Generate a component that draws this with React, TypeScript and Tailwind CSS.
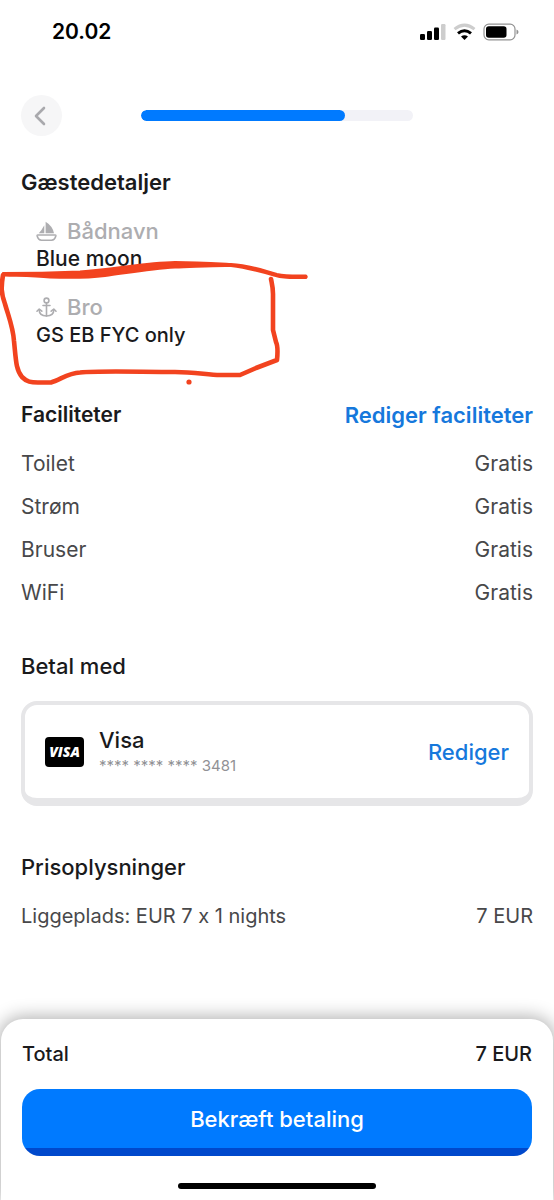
import React from "react";

const facilities = [
  { name: "Toilet", price: "Gratis" },
  { name: "Strøm", price: "Gratis" },
  { name: "Bruser", price: "Gratis" },
  { name: "WiFi", price: "Gratis" },
];

export default function App() {
  return (
    <div className="relative min-h-screen flex flex-col bg-white font-['Inter','Liberation_Sans',sans-serif] [font-feature-settings:'calt'_0] text-[22px] leading-7 text-[#1a1a1c] overflow-x-hidden">
      <StatusBar />

      <header className="grid grid-cols-[120px_1fr_120px] items-center px-[21px] pt-8">
        <button aria-label="Tilbage" className="w-[41px] h-[41px] pr-[3px] rounded-full bg-[#f6f6f7] flex items-center justify-center cursor-pointer">
          <svg width="12" height="20" viewBox="0 0 12 20" fill="none" stroke="#a9a9ad" strokeWidth="2.6" strokeLinecap="round" strokeLinejoin="round">
            <path d="M10 2 L2 10 L10 18" />
          </svg>
        </button>
        <div role="progressbar" aria-label="Trin" aria-valuenow={75} aria-valuemin={0} aria-valuemax={100} className="h-[11px] rounded-full bg-[#f2f2f7] overflow-hidden">
          <div className="h-full w-3/4 rounded-full bg-[#007aff]" />
        </div>
      </header>

      <main className="flex flex-col px-[21px] pt-8">
        {/* Guest details */}
        <section>
          <h2 className="font-semibold">Gæstedetaljer</h2>
          <dl className="flex flex-col gap-5 pt-[21px] pl-[15px] font-medium">
            <div>
              <dt className="flex items-center gap-2.5 text-[#adadb0]">
                <BoatIcon />
                Bådnavn
              </dt>
              <dd className="text-[21px] leading-7">Blue moon</dd>
            </div>
            <div>
              <dt className="flex items-center gap-2.5 text-[#adadb0]">
                <AnchorIcon />
                Bro
              </dt>
              <dd className="text-xl leading-7">GS EB FYC only</dd>
            </div>
          </dl>
        </section>

        {/* Facilities */}
        <section className="pt-[52px]">
          <div className="flex justify-between items-center font-semibold">
            <h2 className="text-[21px] leading-7">Faciliteter</h2>
            <a href="#faciliteter" className="text-[#1678dc]">Rediger faciliteter</a>
          </div>
          <ul className="flex flex-col gap-[15px] pt-[21px] text-[21px] leading-7 text-[#48484a]">
            {facilities.map((f) => (
              <li key={f.name} className="flex justify-between">
                <span>{f.name}</span>
                <span>{f.price}</span>
              </li>
            ))}
          </ul>
        </section>

        {/* Payment method */}
        <section className="pt-[45px]">
          <h2 className="font-medium">Betal med</h2>
          <div className="mt-[21px] h-[105px] flex items-center rounded-2xl border-4 border-b-8 border-[#e6e6e8] px-5">
            <VisaLogo />
            <div className="flex-1 pl-[15px]">
              <p className="font-medium">Visa</p>
              <p className="text-[15px] leading-6 text-[#919195]">**** **** **** 3481</p>
            </div>
            <a href="#betaling" className="font-medium text-[#1678dc]">Rediger</a>
          </div>
        </section>

        {/* Price */}
        <section className="pt-[47px] pb-[60px]">
          <h2 className="font-medium">Prisoplysninger</h2>
          <div className="flex justify-between pt-[21px] text-xl leading-7 text-[#48484a]">
            <span>Liggeplads: EUR 7 x 1 nights</span>
            <span>7 EUR</span>
          </div>
        </section>
      </main>

      <footer className="mt-auto mx-px rounded-t-[22px] bg-white px-[21px] pt-[21px] pb-[11px] shadow-[0_0_18px_2px_rgba(0,0,0,0.32)]">
        <div className="flex justify-between text-xl leading-7 font-medium">
          <span>Total</span>
          <span>7 EUR</span>
        </div>
        <button className="mt-[21px] w-full h-[67px] pb-2 rounded-[18px] bg-[linear-gradient(to_bottom,#007aff_59px,#0049cc_59px)] text-white font-medium cursor-pointer">
          Bekræft betaling
        </button>
        <div className="mt-[27px] mx-auto w-[198px] h-1.5 rounded-full bg-black" />
      </footer>

      <RedMarker />
    </div>
  );
}

function StatusBar() {
  return (
    <div className="h-[63px] flex items-center justify-between pl-[52px] pr-[35px] text-black">
      <span className="text-[21px] leading-7 font-semibold">20.02</span>
      <svg width="99" height="18" viewBox="0 0 99 18">
        {/* signal */}
        <rect x="0" y="11" width="5" height="6" rx="1.2" />
        <rect x="7" y="8" width="5" height="9" rx="1.2" />
        <rect x="14" y="4.5" width="5" height="12.5" rx="1.2" />
        <rect x="21" y="1" width="4.5" height="16" rx="1.2" fill="#cdcdcd" />
        {/* wifi */}
        <g fill="none" strokeWidth="3">
          <path d="M34.5 6.2 Q44.5 -2 54.5 6.2" stroke="#cdcdcd" />
          <path d="M38 10.4 Q44.5 5 51 10.4" stroke="#000" />
        </g>
        <path d="M41 13.5 Q44.5 10.8 48 13.5 L44.5 17 Z" />
        {/* battery */}
        <rect x="64" y="1.2" width="31" height="15.6" rx="4.8" fill="none" stroke="#929292" strokeWidth="1.2" />
        <rect x="66" y="3.2" width="20.5" height="11.6" rx="2.8" />
        <path d="M96.5 6.5 Q98.500 7.2 98.5 9 Q98.5 10.8 96.5 11.5 Z" fill="#929292" />
      </svg>
    </div>
  );
}

function BoatIcon() {
  return (
    <svg width="21" height="21" viewBox="0 0 21 21" fill="currentColor">
      <path d="M9.6 0.8 Q16.5 5 18 12.2 H9.6 Z" />
      <path d="M8.300 4.200 V12.200 H2.800 Q5.500 9.500 8.300 4.200 Z" />
      <path d="M1.8 14 H19.2 Q20 14 19.8 15 Q18.8 19.2 15.5 19.2 H5.5 Q2.2 19.2 1.2 15 Q1 14 1.8 14 Z" fill="none" stroke="currentColor" strokeWidth="1.6" />
    </svg>
  );
}

function AnchorIcon() {
  return (
    <svg width="21" height="21" viewBox="0 0 21 21" fill="none" stroke="currentColor" strokeWidth="1.6" strokeLinecap="round" strokeLinejoin="round">
      <circle cx="10.5" cy="3.5" r="2.4" />
      <path d="M10.5 6 V19 M7 8.5 H14" />
      <path d="M3.2 12.8 Q3.2 19 10.5 19 Q17.8 19 17.8 12.8" />
      <path d="M1 14.2 L3.2 12 L5.8 14.2 M15.2 14.2 L17.8 12 L20 14.2" />
    </svg>
  );
}

function VisaLogo() {
  return (
    <div aria-hidden="true" className="w-[39px] h-[30px] rounded bg-black text-white flex items-center justify-center font-['Open_Sans',sans-serif] font-extrabold italic text-sm leading-none">
      VISA
    </div>
  );
}

// Freehand marker drawn around the berth name
function RedMarker() {
  return (
    <svg className="absolute top-0 left-0 pointer-events-none" width="320" height="400" viewBox="0 0 320 400" fill="none" stroke="#f2431f" strokeLinecap="round" strokeLinejoin="round">
      <path fill="#f2431f" strokeWidth="2" d="M3 273 C30 273 55 272.5 80 271.5 C115 269 145 262.5 175 262 C195 262 212 263 231 264 C250 265 262 270 277 274 C287 276 296 275.5 306 275.500 Q307.500 276.500 306 278 C290 278 281 278 274 275.500 C260 271.500 248 268 231 266 C215 265.500 195 267 175 267.500 C150 269 128 273 105 276 C85 278.500 65 278 50 277.500 C35 276 20 276 5 275.500 Z" />
      <path strokeWidth="4.600" d="M3 275 C1 287 1 293 5 304 C9 318 13 327 14 341 C16 361 16 370 22 377 C27 382 31 382.500 38 382.500 H51 C60 380 68 373 80 372.500 C100 370.500 140 372 175 372 C195 372 208 375 220 375 H240 L256 368 L277 360 C278 350 278 346 276 342 L273 330 V294 C273 287 272 284 271 279" />
      <circle cx="189" cy="382" r="2.6" fill="#f2431f" stroke="none" />
    </svg>
  );
}
